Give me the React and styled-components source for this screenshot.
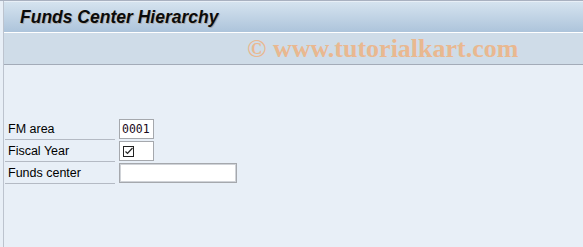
import React from 'react'
import styled, { createGlobalStyle } from 'styled-components'

const Global = createGlobalStyle`
  html, body {
    margin: 0;
    padding: 0;
    background: #e8eff7;
  }
  #root {
    height: 247px;
  }
`

const Page = styled.div`
  height: 247px;
  padding-left: 3px;
  background: #e8eff7;
  border-top: 1px solid #a9b1c0;
  box-sizing: border-box;
  overflow: hidden;
`

const Frame = styled.div`
  height: 100%;
  border-left: 1px solid #bcc3ce;
  display: flex;
  flex-direction: column;
`

const TitleBar = styled.div`
  height: 30px;
  margin-top: 1px;
  background: linear-gradient(#d5e3ef, #adc4db);
  border-bottom: 1px solid #ffffff;
  display: flex;
  align-items: center;
  padding-left: 16px;
`

const Title = styled.h1`
  margin: 0;
  font-family: "Liberation Sans", Arial, sans-serif;
  font-size: 17.5px;
  font-weight: bold;
  font-style: italic;
  color: #0a0a0a;
  text-shadow: 1px 1px 0 rgba(150, 100, 50, 0.35);
`

const Toolbar = styled.div`
  height: 32px;
  background: #cfdce8;
  border-bottom: 1px solid #a3abb8;
  display: flex;
  align-items: flex-end;
  padding-left: 243px;
  box-sizing: border-box;
`

const Watermark = styled.span`
  font-family: "Liberation Serif", "Times New Roman", serif;
  font-size: 26px;
  font-weight: bold;
  color: #e9b890;
  line-height: 1;
  margin-bottom: 2px;
  white-space: nowrap;
`

const Form = styled.div`
  padding: 53px 0 0 1px;
  display: flex;
  flex-direction: column;
`

const Row = styled.div`
  display: flex;
  align-items: center;
  height: 22px;
`

const Label = styled.div`
  width: 107px;
  height: 21px;
  padding-left: 3px;
  border-bottom: 1px solid #b4bac4;
  font-family: "Liberation Sans", Arial, sans-serif;
  font-size: 12.5px;
  color: #000;
  display: flex;
  align-items: center;
`

const Field = styled.div`
  margin-left: 4px;
  width: ${p => p.w}px;
  height: 20px;
  box-sizing: border-box;
  background: #ffffff;
  border: 1px solid #a5a8ad;
  box-shadow: ${p => (p.wide ? 'inset 0 0 0 1px #d0d3d8' : 'none')};
  font-family: "DejaVu Sans Mono", "Liberation Mono", monospace;
  font-size: 11.5px;
  color: #1a0a20;
  display: flex;
  align-items: center;
  padding-left: 2px;
`

const Check = () => (
  <svg width="11" height="11" viewBox="0 0 11 11" style={{ marginLeft: 1 }}>
    <rect x="0.5" y="0.5" width="10" height="10" fill="none" stroke="#222" strokeWidth="1" />
    <path d="M2.5 5.5 L4.5 7.5 L9.5 2" fill="none" stroke="#222" strokeWidth="1.2" />
  </svg>
)

const App = () => {
  return (
    <>
      <Global />
      <Page>
        <Frame>
          <TitleBar>
            <Title>Funds Center Hierarchy</Title>
          </TitleBar>
          <Toolbar>
            <Watermark>© www.tutorialkart.com</Watermark>
          </Toolbar>
          <Form>
            <Row>
              <Label>FM area</Label>
              <Field w={35}>0001</Field>
            </Row>
            <Row>
              <Label>Fiscal Year</Label>
              <Field w={35}><Check /></Field>
            </Row>
            <Row>
              <Label>Funds center</Label>
              <Field w={118} wide />
            </Row>
          </Form>
        </Frame>
      </Page>
    </>
  )
}

export default App
